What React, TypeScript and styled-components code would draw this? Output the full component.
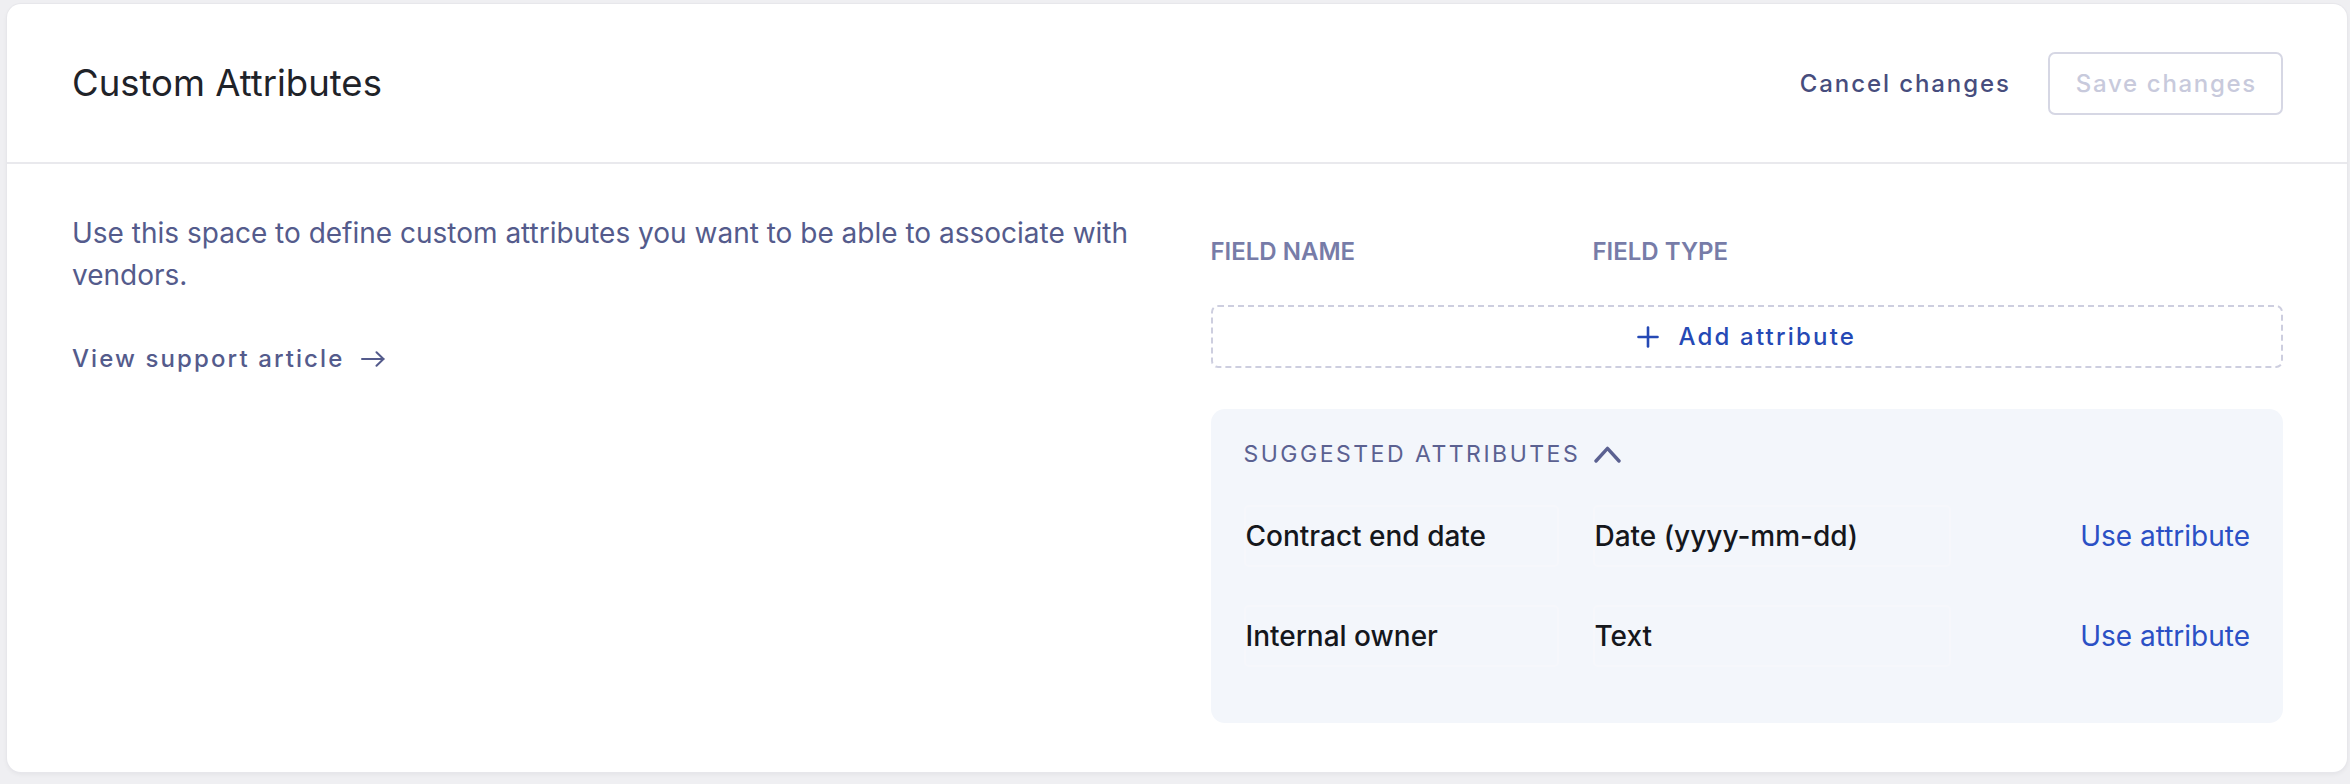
import styled, { createGlobalStyle } from 'styled-components'

const GlobalStyle = createGlobalStyle`
  html, body {
    margin: 0;
    padding: 0;
    background: #efeff2;
  }
  body {
    font-family: Inter, "Noto Sans", "Liberation Sans", sans-serif;
    -webkit-font-smoothing: antialiased;
  }
`

const Card = styled.section`
  margin: 4px 3px 12px 7px;
  background: #ffffff;
  border-radius: 14px;
  box-shadow: 0 0 0 1px #e7e7eb, 0 2px 5px rgba(20, 20, 40, 0.06);
  overflow: hidden;
`

const Header = styled.header`
  height: 158px;
  padding: 0 64px 0 65px;
  display: flex;
  align-items: center;
  justify-content: space-between;
  border-bottom: 2px solid #e9e9ed;
`

const Title = styled.h1`
  margin: 0;
  font-size: 36.5px;
  font-weight: 400;
  line-height: 44px;
  color: #1f2329;
`

const Actions = styled.div`
  display: flex;
  align-items: center;
  gap: 37px;
`

const TextButton = styled.button`
  background: none;
  border: none;
  padding: 0;
  font-family: inherit;
  font-size: 24px;
  font-weight: 500;
  letter-spacing: 1.9px;
  color: #474d7d;
  cursor: pointer;
`

const OutlineButton = styled.button<{ disabled?: boolean }>`
  height: 63px;
  padding: 0 24px 0 26px;
  background: #ffffff;
  border: 2px solid #d6d7e4;
  border-radius: 7px;
  font-family: inherit;
  font-size: 24px;
  font-weight: 500;
  letter-spacing: 1.7px;
  color: ${({ disabled }) => (disabled ? '#c8cadc' : '#474d7d')};
  cursor: ${({ disabled }) => (disabled ? 'default' : 'pointer')};
`

const Body = styled.div`
  display: grid;
  grid-template-columns: 1fr 1fr;
  column-gap: 66px;
  padding: 48px 64px 49px 65px;
`

const Intro = styled.div`
  display: flex;
  flex-direction: column;
  align-items: flex-start;
  gap: 45px;
`

const Description = styled.p`
  margin: 0;
  font-size: 28px;
  line-height: 42px;
  color: #545b8c;
`

const SupportLink = styled.a`
  display: inline-flex;
  align-items: center;
  gap: 17px;
  font-size: 24px;
  line-height: 36px;
  font-weight: 500;
  letter-spacing: 2.1px;
  color: #545b8c;
  text-decoration: none;
  cursor: pointer;
`

const Editor = styled.div`
  display: flex;
  flex-direction: column;
  padding-top: 22px;
`

const FieldLabels = styled.div`
  display: grid;
  grid-template-columns: 382px 1fr;
  margin-bottom: 35px;
`

const FieldLabel = styled.span`
  font-size: 24px;
  line-height: 36px;
  font-weight: 600;
  color: #777ca8;
`

const AddButton = styled.button`
  height: 63px;
  display: flex;
  align-items: center;
  justify-content: center;
  gap: 19px;
  background: #ffffff;
  border: 2px dashed #cdcedf;
  border-radius: 7px;
  font-family: inherit;
  font-size: 24px;
  font-weight: 500;
  letter-spacing: 2.2px;
  color: #2549b5;
  cursor: pointer;
  margin-bottom: 41px;
`

const Suggested = styled.div`
  background: #f3f6fb;
  border-radius: 14px;
  padding: 28px 33px 56px;
`

const SuggestedToggle = styled.button`
  display: inline-flex;
  align-items: center;
  gap: 14px;
  background: none;
  border: none;
  padding: 0;
  font-family: inherit;
  font-size: 23px;
  line-height: 34px;
  font-weight: 400;
  letter-spacing: 2.5px;
  color: #5b6191;
  cursor: pointer;
  margin-bottom: 34px;
`

const SuggestedGrid = styled.div`
  display: grid;
  grid-template-columns: 315px 358px 1fr;
  column-gap: 34px;
  row-gap: 38px;
  align-items: center;
`

const Cell = styled.div`
  height: 62px;
  box-sizing: border-box;
  display: flex;
  align-items: center;
  border: 2px solid #f6f7fb;
  border-radius: 5px;
  font-size: 28px;
  font-weight: 500;
  color: #15171c;
`

const UseButton = styled.button`
  justify-self: end;
  background: none;
  border: none;
  padding: 0;
  font-family: inherit;
  font-size: 28px;
  font-weight: 400;
  color: #2b50c5;
  cursor: pointer;
`

const ArrowRight = () => (
  <svg width="24" height="16" viewBox="0 0 24 16" fill="none" stroke="currentColor" strokeWidth="2" strokeLinecap="round" strokeLinejoin="round">
    <line x1="1" y1="8" x2="22.5" y2="8" />
    <polyline points="15.5,1.2 22.5,8 15.5,14.8" />
  </svg>
)

const Plus = () => (
  <svg width="22" height="22" viewBox="0 0 22 22" fill="none" stroke="currentColor" strokeWidth="2.6" strokeLinecap="round">
    <line x1="11" y1="1.5" x2="11" y2="20.5" />
    <line x1="1.5" y1="11" x2="20.5" y2="11" />
  </svg>
)

const ChevronUp = () => (
  <svg width="27" height="17" viewBox="0 0 27 17" fill="none" stroke="currentColor" strokeWidth="3.4" strokeLinecap="round" strokeLinejoin="round">
    <polyline points="2,15 13.5,2.4 25,15" />
  </svg>
)

const suggestions = [
  { name: 'Contract end date', type: 'Date (yyyy-mm-dd)' },
  { name: 'Internal owner', type: 'Text' },
]

export default function App() {
  return (
    <>
      <GlobalStyle />
      <Card>
        <Header>
          <Title>Custom Attributes</Title>
          <Actions>
            <TextButton>Cancel changes</TextButton>
            <OutlineButton disabled>Save changes</OutlineButton>
          </Actions>
        </Header>

        <Body>
          <Intro>
            <Description>
              Use this space to define custom attributes you want to be able to associate with vendors.
            </Description>
            <SupportLink>
              View support article
              <ArrowRight />
            </SupportLink>
          </Intro>

          <Editor>
            <FieldLabels>
              <FieldLabel>FIELD NAME</FieldLabel>
              <FieldLabel>FIELD TYPE</FieldLabel>
            </FieldLabels>

            <AddButton>
              <Plus />
              Add attribute
            </AddButton>

            <Suggested>
              <SuggestedToggle aria-expanded>
                SUGGESTED ATTRIBUTES
                <ChevronUp />
              </SuggestedToggle>
              <SuggestedGrid>
                {suggestions.map((s) => (
                  <>
                    <Cell key={s.name + '-name'}>{s.name}</Cell>
                    <Cell key={s.name + '-type'}>{s.type}</Cell>
                    <UseButton key={s.name + '-use'}>Use attribute</UseButton>
                  </>
                ))}
              </SuggestedGrid>
            </Suggested>
          </Editor>
        </Body>
      </Card>
    </>
  )
}
